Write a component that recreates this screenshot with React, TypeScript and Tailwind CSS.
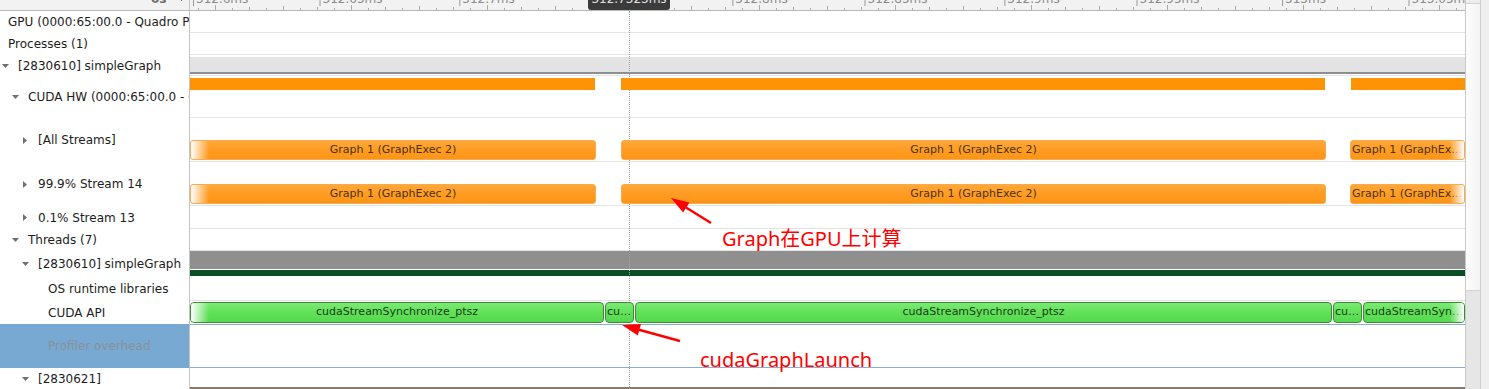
import React from 'react';

const rulerLabels: [number, string][] = [
  [161, '312.65ms'],
  [297, '312.7ms'],
  [570, '312.8ms'],
  [706, '312.85ms'],
  [842, '312.9ms'],
  [978, '312.95ms'],
  [1114, '313ms'],
  [1250, '313.05ms'],
];

function Caret({ open }: { open: boolean }) {
  return (
    <span className="flex w-[16px] shrink-0 items-center">
      {open ? (
        <svg width="7" height="4" viewBox="0 0 7 4">
          <path d="M0 0H7L3.5 4Z" fill="#707070" />
        </svg>
      ) : (
        <svg width="4" height="7" viewBox="0 0 4 7" className="ml-[1px]">
          <path d="M0 0L4 3.5L0 7Z" fill="#707070" />
        </svg>
      )}
    </span>
  );
}

function Ticks() {
  const ticks = [];
  for (let i = -2; i < 76; i++) {
    const x = 25 + i * 17;
    if (x < 0 || x > 1275) continue;
    const h = i % 8 === 0 ? 5 : i % 4 === 0 ? 4 : i % 2 === 0 ? 3 : 2;
    ticks.push(<line key={i} x1={x + 0.5} x2={x + 0.5} y1={10 - h} y2={10} stroke="#a9a9a9" />);
  }
  return (
    <svg className="absolute inset-0" width="1275" height="10">
      {ticks}
    </svg>
  );
}

function OrangePill({ w, text, fade, left }: { w: string; text: string; fade?: 'l' | 'r'; left?: boolean }) {
  return (
    <div
      className={`relative z-20 flex h-full ${w} items-center overflow-hidden whitespace-nowrap rounded-[3px] border border-[#f7ab4c] bg-linear-to-b from-[#ffa738] via-[#ff9c22] to-[#fc9516] text-[11px] text-[#4a3313] ${left ? 'justify-start pl-[1px]' : 'justify-center'}`}
    >
      {text}
      {fade === 'l' && <div className="absolute inset-y-0 left-0 w-[18px] bg-linear-to-r from-white to-transparent" />}
      {fade === 'r' && <div className="absolute inset-y-0 right-0 w-[14px] bg-linear-to-l from-white to-transparent" />}
    </div>
  );
}

function GreenPill({ w, text, fade, left }: { w: string; text: string; fade?: 'l' | 'r'; left?: boolean }) {
  return (
    <div
      className={`relative z-20 flex h-full ${w} items-center overflow-hidden whitespace-nowrap rounded-[4px] border border-[#3d8b38] bg-linear-to-b from-[#7aeb73] via-[#60e158] to-[#56d84e] text-[11px] text-[#1c3b1a] ${left ? 'justify-start pl-[1px]' : 'justify-center'}`}
    >
      {text}
      {fade === 'l' && <div className="absolute inset-y-0 left-0 w-[18px] bg-linear-to-r from-white to-transparent" />}
      {fade === 'r' && <div className="absolute inset-y-0 right-0 w-[14px] bg-linear-to-l from-white to-transparent" />}
    </div>
  );
}

export default function App() {
  return (
    <div className="relative flex h-[389px] w-[1489px] overflow-hidden bg-white font-['DejaVu_Sans',sans-serif] text-[12px] text-[#1c1c1c]">
      <div className="flex w-[1465px] flex-col">
        {/* time ruler */}
        <div className="flex h-[11px] shrink-0 border-b border-[#b8b8b8] bg-[#f2f2f2]">
          <div className="relative w-[190px] overflow-hidden border-r border-[#c4c4c4]">
            <div className="absolute left-[151px] top-[-8px] flex items-end gap-[11px] leading-[14px]">
              <span className="font-bold text-[#6d6d6d]">0s</span>
              <svg width="7" height="5" viewBox="0 0 7 5" className="mb-[5px]">
                <path d="M0 0H7L3.5 5Z" fill="#111" />
              </svg>
            </div>
          </div>
          <div className="relative flex-1 overflow-hidden">
            <Ticks />
            <div className="absolute left-[3px] top-[-8px] flex items-center gap-[2px] whitespace-nowrap leading-[14px] text-[#8a8a8a]">
              <span className="h-[14px] border-l border-[#9a9a9a]" />
              312.6ms
            </div>
            {rulerLabels.map(([x, t]) => (
              <div
                key={t}
                className="absolute top-[-8px] flex -translate-x-1/2 items-center gap-[2px] whitespace-nowrap leading-[14px] text-[#8a8a8a]"
                style={{ left: x }}
              >
                <span className="h-[14px] border-l border-[#9a9a9a]" />
                {t}
              </div>
            ))}
            <div className="absolute left-[398px] top-[-9px] flex h-[19px] w-[82px] items-end justify-center rounded-b-[3px] bg-[#3b3b3b] pb-[4px] leading-[14px] text-[#e2e2e2]">
              312.7323ms
            </div>
          </div>
        </div>

        {/* GPU */}
        <div className="flex h-[22px] shrink-0">
          <div className="flex w-[190px] items-center overflow-hidden whitespace-nowrap border-r border-[#c4c4c4] pl-[8px]">
            GPU (0000:65:00.0 - Quadro P6000)
          </div>
          <div className="flex-1 border-b border-[#e4e4e4]" />
        </div>

        {/* Processes */}
        <div className="flex h-[22px] shrink-0">
          <div className="flex w-[190px] items-center whitespace-nowrap border-r border-[#c4c4c4] pl-[8px]">Processes (1)</div>
          <div className="flex-1 border-b border-[#e4e4e4]" />
        </div>

        {/* process */}
        <div className="flex h-[21px] shrink-0">
          <div className="flex w-[190px] items-center whitespace-nowrap border-r border-[#c4c4c4] pl-[2px]">
            <Caret open />
            [2830610] simpleGraph
          </div>
          <div className="flex flex-1 flex-col border-b border-[#e4e4e4] pt-[2px]">
            <div className="h-[15px] bg-[#e3e3e3]" />
            <div className="h-[2px] bg-[#8e8e8e]" />
          </div>
        </div>

        {/* CUDA HW */}
        <div className="flex h-[42px] shrink-0">
          <div className="flex w-[190px] items-center overflow-hidden whitespace-nowrap border-r border-[#c4c4c4] pl-[12px]">
            <Caret open />
            CUDA HW (0000:65:00.0 - Quadro P6000)
          </div>
          <div className="flex-1 border-b border-[#e4e4e4] pt-[2px]">
            <div className="flex h-[12px]">
              <div className="relative z-20 w-[405px] bg-[#ff9306]" />
              <div className="w-[26px]" />
              <div className="relative z-20 w-[704px] bg-[#ff9306]" />
              <div className="w-[26px]" />
              <div className="relative z-20 flex-1 bg-[#ff9306]" />
            </div>
          </div>
        </div>

        {/* All Streams */}
        <div className="flex h-[44px] shrink-0">
          <div className="flex w-[190px] items-center whitespace-nowrap border-r border-[#c4c4c4] pl-[22px]">
            <Caret open={false} />
            [All Streams]
          </div>
          <div className="flex-1 border-b border-[#e4e4e4] pt-[22px]">
            <div className="flex h-[20px]">
              <OrangePill w="w-[406px]" text="Graph 1 (GraphExec 2)" fade="l" />
              <div className="w-[25px]" />
              <OrangePill w="w-[705px]" text="Graph 1 (GraphExec 2)" />
              <div className="w-[24px]" />
              <OrangePill w="flex-1" text="Graph 1 (GraphEx…" fade="r" left />
            </div>
          </div>
        </div>

        {/* Stream 14 */}
        <div className="flex h-[44px] shrink-0">
          <div className="flex w-[190px] items-center whitespace-nowrap border-r border-[#c4c4c4] pl-[22px]">
            <Caret open={false} />
            99.9% Stream 14
          </div>
          <div className="flex-1 border-b border-[#e4e4e4] pt-[22px]">
            <div className="flex h-[20px]">
              <OrangePill w="w-[406px]" text="Graph 1 (GraphExec 2)" fade="l" />
              <div className="w-[25px]" />
              <OrangePill w="w-[705px]" text="Graph 1 (GraphExec 2)" />
              <div className="w-[24px]" />
              <OrangePill w="flex-1" text="Graph 1 (GraphEx…" fade="r" left />
            </div>
          </div>
        </div>

        {/* Stream 13 */}
        <div className="flex h-[23px] shrink-0">
          <div className="flex w-[190px] items-center whitespace-nowrap border-r border-[#c4c4c4] pl-[22px]">
            <Caret open={false} />
            0.1% Stream 13
          </div>
          <div className="flex-1 border-b border-[#e4e4e4]" />
        </div>

        {/* Threads */}
        <div className="flex h-[22px] shrink-0">
          <div className="flex w-[190px] items-center whitespace-nowrap border-r border-[#c4c4c4] pl-[12px]">
            <Caret open />
            Threads (7)
          </div>
          <div className="flex-1 border-b border-[#e4e4e4]" />
        </div>

        {/* thread */}
        <div className="flex h-[26px] shrink-0">
          <div className="flex w-[190px] items-center whitespace-nowrap border-r border-[#c4c4c4] pl-[22px]">
            <Caret open />
            [2830610] simpleGraph
          </div>
          <div className="flex flex-1 flex-col">
            <div className="h-[18px] bg-[#8f8f8f]" />
            <div className="mt-[1px] h-[6px] bg-[#0b4f24]" />
          </div>
        </div>

        {/* OS runtime */}
        <div className="flex h-[24px] shrink-0">
          <div className="flex w-[190px] items-center whitespace-nowrap border-r border-[#c4c4c4] pl-[48px]">OS runtime libraries</div>
          <div className="flex-1 border-b border-[#e4e4e4]" />
        </div>

        {/* CUDA API */}
        <div className="flex h-[23px] shrink-0">
          <div className="flex w-[190px] items-center whitespace-nowrap border-r border-[#c4c4c4] pl-[48px]">CUDA API</div>
          <div className="flex-1 pt-[1px]">
            <div className="flex h-[21px] gap-[1px]">
              <GreenPill w="w-[414px]" text="cudaStreamSynchronize_ptsz" fade="l" />
              <GreenPill w="w-[29px]" text="cu…" left />
              <GreenPill w="w-[697px]" text="cudaStreamSynchronize_ptsz" />
              <GreenPill w="w-[29px]" text="cu…" left />
              <GreenPill w="flex-1" text="cudaStreamSyn…" fade="r" left />
            </div>
          </div>
        </div>

        {/* Profiler overhead */}
        <div className="flex h-[44px] shrink-0">
          <div className="flex w-[190px] items-center whitespace-nowrap border-r border-[#c4c4c4] bg-[#78a9d3] pl-[48px] text-[#8a9098]">
            Profiler overhead
          </div>
          <div className="flex-1 border-y border-[#8aadd4]" />
        </div>

        {/* next thread */}
        <div className="flex flex-1">
          <div className="flex w-[190px] items-center whitespace-nowrap border-r border-[#c4c4c4] pl-[22px]">
            <Caret open />
            [2830621]
          </div>
          <div className="flex-1 pt-[19px]">
            <div className="h-[3px] bg-[#8b7b6e]" />
          </div>
        </div>
      </div>

      {/* scrollbar */}
      <div className="flex w-[24px] border-l border-[#c9c9c9]">
        <div className="flex w-[14px] flex-col">
          <div className="h-[3px] bg-[#ececec]" />
          <div className="h-[288px] border-y border-[#d3d3d3] bg-linear-to-r from-[#fdfdfd] to-[#f3f3f3]" />
          <div className="flex-1 bg-[#e6e6e6]" />
        </div>
        <div className="flex-1 border-l border-[#cfcfcf] bg-[#efefef]" />
      </div>

      {/* cursor line */}
      <div className="absolute bottom-0 left-[629px] top-[11px] z-10 border-l border-dotted border-[#a3a3a3]" />

      {/* annotations */}
      <svg className="pointer-events-none absolute inset-0 z-30" width="1489" height="389">
        <line x1="711" y1="223" x2="686" y2="207.5" stroke="#ff0000" strokeWidth="2.5" />
        <polygon points="671,198 689.5,202.4 683.1,212.6" fill="#ff0000" />
        <line x1="680" y1="341" x2="639" y2="329.8" stroke="#ff0000" strokeWidth="2.5" />
        <polygon points="622,325 641,324 637.8,335.6" fill="#ff0000" />
      </svg>
      <div className="absolute left-[722px] top-[229px] z-30 whitespace-nowrap font-['Noto_Sans','Noto_Sans_CJK_SC',sans-serif] text-[20px] leading-[20px] text-[#ff0000]">
        Graph在GPU上计算
      </div>
      <div className="absolute left-[700px] top-[350px] z-30 whitespace-nowrap font-['Noto_Sans','Noto_Sans_CJK_SC',sans-serif] text-[20px] leading-[20px] text-[#ff0000]">
        cudaGraphLaunch
      </div>
    </div>
  );
}
